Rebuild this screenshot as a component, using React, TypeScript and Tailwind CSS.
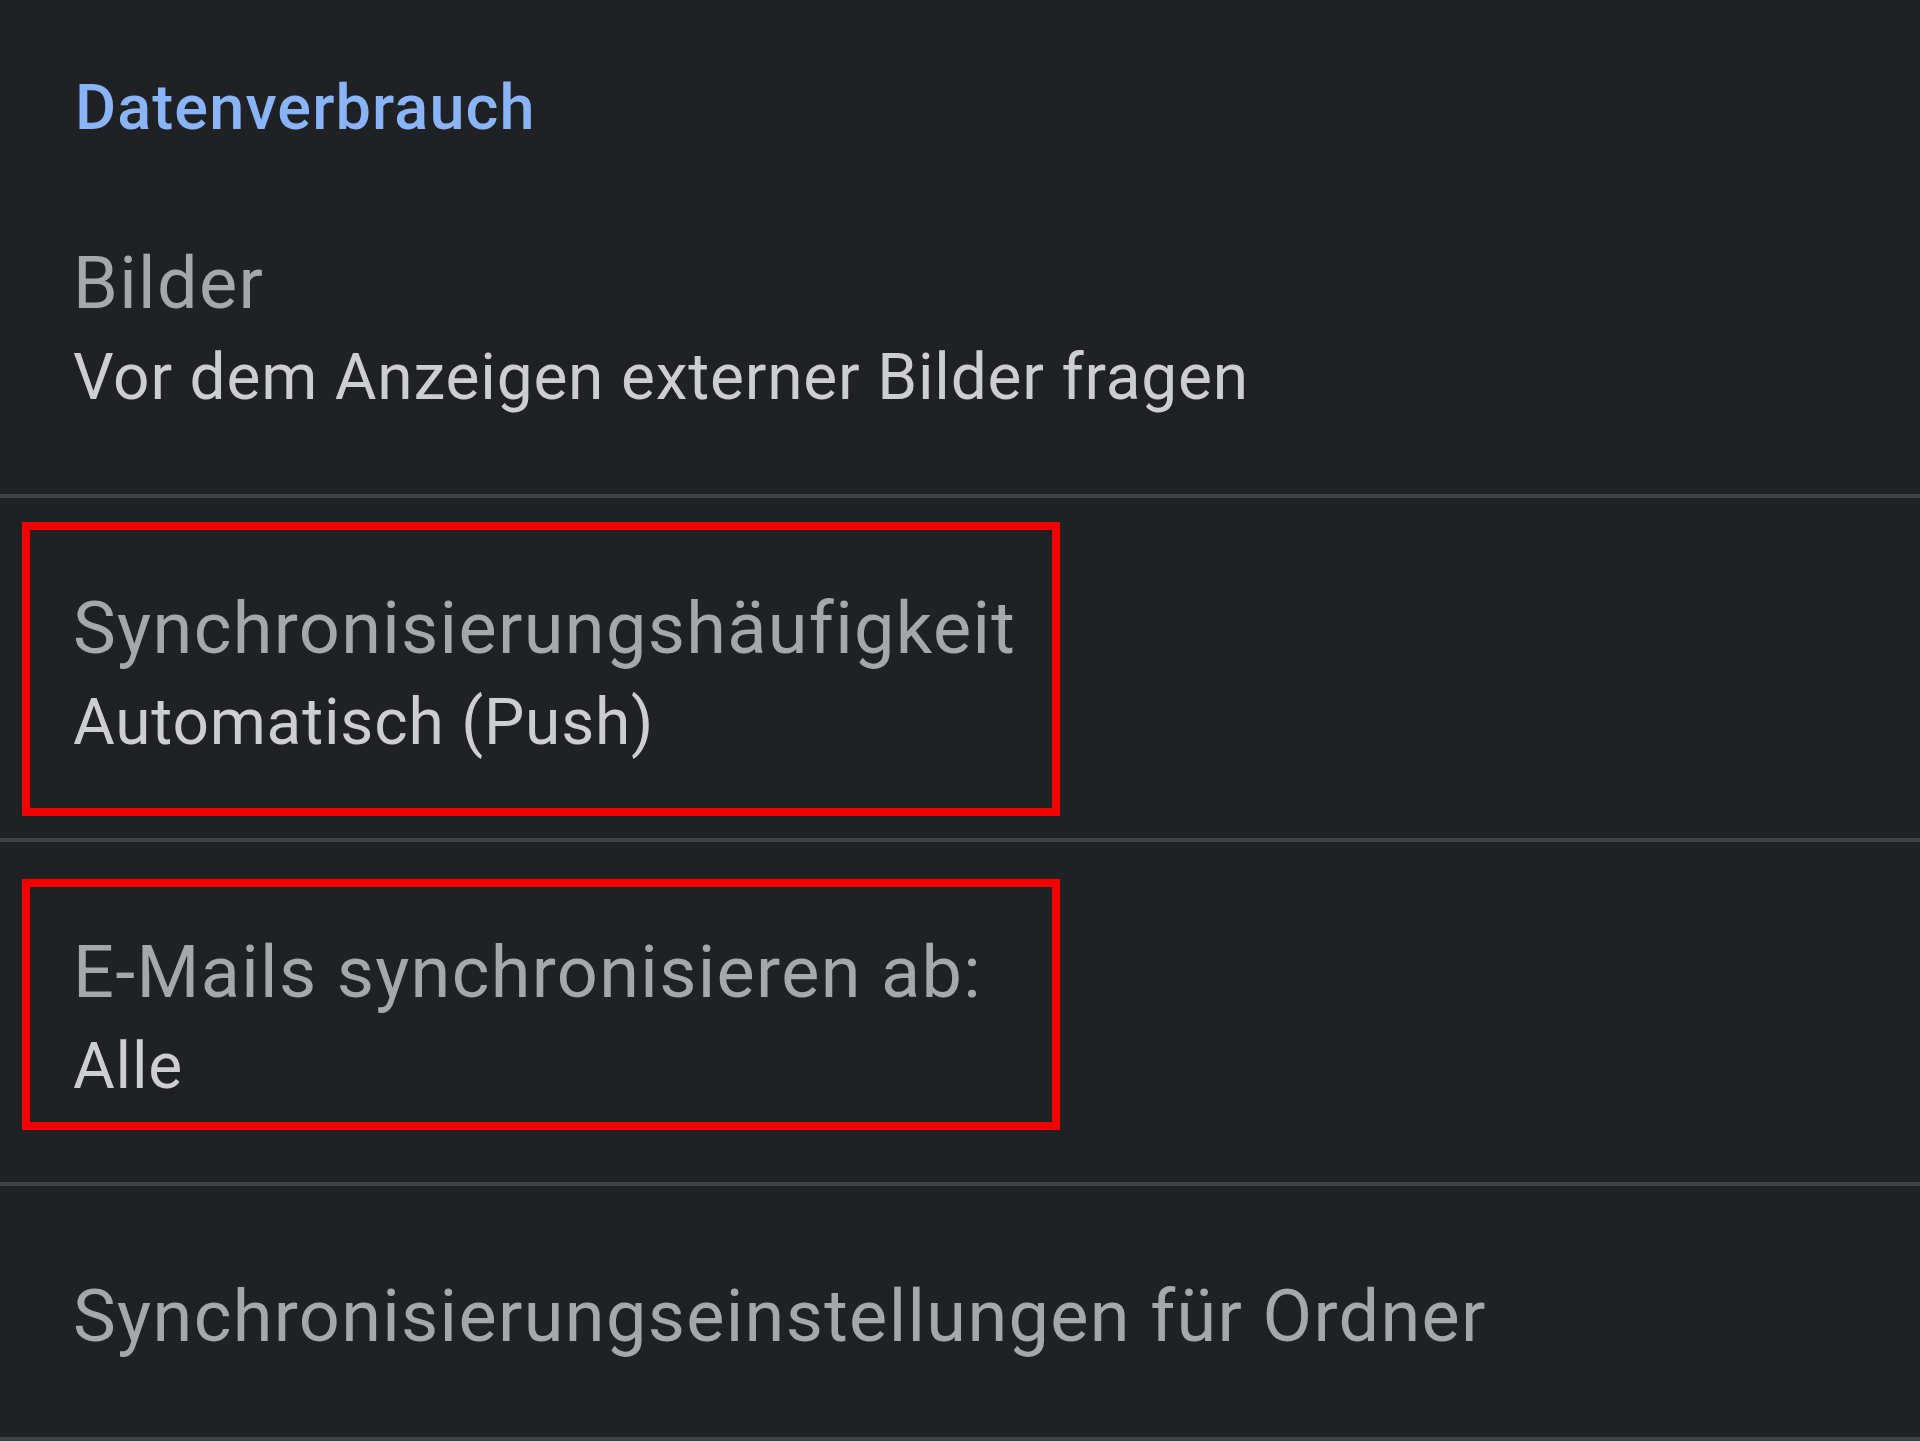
import React from "react";

const font = { fontFamily: "Roboto, 'Noto Sans', sans-serif" };

function Divider() {
  return <div className="h-[4px] w-full bg-[#3f4245]" />;
}

function Row({
  title,
  summary,
  box,
}: {
  title: string;
  summary?: string;
  box?: "a" | "b";
}) {
  return (
    <div
      className={
        "relative flex flex-col pl-[73px] pt-[87px] " +
        (summary ? "pb-[65px]" : "pb-[76px]")
      }
    >
      <div className="text-[72px] leading-[88px] tracking-[1.35px] text-[#a4a7ac] whitespace-nowrap">
        {title}
      </div>
      {summary && (
        <div className="text-[64px] leading-[100px] tracking-[0.8px] text-[#cdced0] whitespace-nowrap">
          {summary}
        </div>
      )}
      {box === "a" && (
        <div className="absolute left-[22px] top-[24px] w-[1038px] h-[294px] border-[8px] border-[#f20000]" />
      )}
      {box === "b" && (
        <div className="absolute left-[22px] top-[37px] w-[1038px] h-[251px] border-[8px] border-[#f20000]" />
      )}
    </div>
  );
}

export default function App() {
  return (
    <div
      className="w-[1920px] h-[1441px] overflow-hidden bg-[#202124] flex flex-col"
      style={font}
    >
      <div className="pl-[75px] pt-[68px] pb-[5px]">
        <div className="text-[63px] leading-[80px] tracking-[1.1px] font-medium text-[#8ab4f8]">
          Datenverbrauch
        </div>
      </div>
      <div className="flex flex-col pl-[73px] pt-[87px] pb-[66px]">
        <div className="text-[72px] leading-[88px] tracking-[1.35px] text-[#a4a7ac] whitespace-nowrap">
          Bilder
        </div>
        <div className="text-[64px] leading-[100px] tracking-[0.8px] text-[#cdced0] whitespace-nowrap">
          Vor dem Anzeigen externer Bilder fragen
        </div>
      </div>
      <Divider />
      <Row title="Synchronisierungshäufigkeit" summary="Automatisch (Push)" box="a" />
      <Divider />
      <Row title="E-Mails synchronisieren ab:" summary="Alle" box="b" />
      <Divider />
      <Row title="Synchronisierungseinstellungen für Ordner" />
      <Divider />
    </div>
  );
}
